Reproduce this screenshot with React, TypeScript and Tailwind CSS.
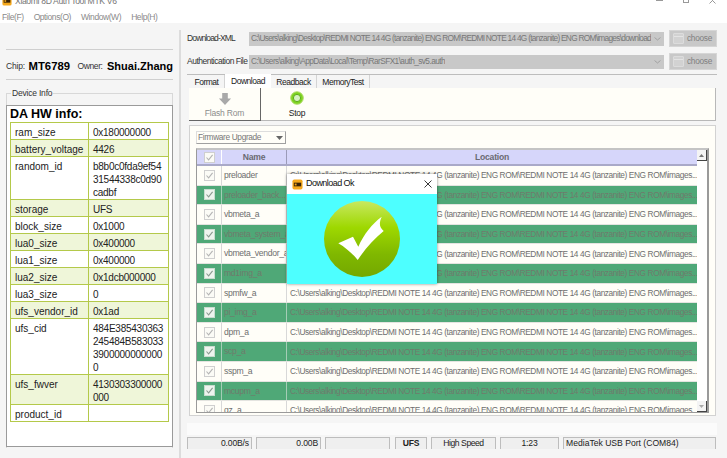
import React from "react";

const PATH = "C:\\Users\\alking\\Desktop\\REDMI NOTE 14 4G (tanzanite) ENG ROM\\REDMI NOTE 14 4G (tanzanite) ENG ROM\\images...";
const FILES = ["preloader", "preloader_back...", "vbmeta_a", "vbmeta_system_a", "vbmeta_vendor_a", "md1img_a", "spmfw_a", "pi_img_a", "dpm_a", "scp_a", "sspm_a", "mcupm_a", "gz_a"];

const INFO: { k: string; v: string[]; h: string }[] = [
  { k: "ram_size", v: ["0x180000000"], h: "h-[17px]" },
  { k: "battery_voltage", v: ["4426"], h: "h-[17px]" },
  { k: "random_id", v: ["b8b0c0fda9ef54", "31544338c0d90", "cadbf"], h: "h-[43px]" },
  { k: "storage", v: ["UFS"], h: "h-[17px]" },
  { k: "block_size", v: ["0x1000"], h: "h-[17px]" },
  { k: "lua0_size", v: ["0x400000"], h: "h-[17px]" },
  { k: "lua1_size", v: ["0x400000"], h: "h-[17px]" },
  { k: "lua2_size", v: ["0x1dcb000000"], h: "h-[17px]" },
  { k: "lua3_size", v: ["0"], h: "h-[17px]" },
  { k: "ufs_vendor_id", v: ["0x1ad"], h: "h-[17px]" },
  { k: "ufs_cid", v: ["484E385430363", "245484B583033", "3900000000000", "0"], h: "h-[56px]" },
  { k: "ufs_fwver", v: ["4130303300000", "000"], h: "h-[30px]" },
  { k: "product_id", v: [""], h: "h-[17px]" },
];

function Logo({ size }: { size: number }) {
  return (
    <svg width={size} height={size} viewBox="0 0 12 12" className="shrink-0">
      <rect x="0.5" y="0.5" width="11" height="11" rx="2" fill="#f5a81c" />
      <rect x="2" y="4" width="8" height="4" fill="#3a2408" />
      <rect x="3" y="5" width="2" height="2" fill="#f5a81c" />
    </svg>
  );
}

function Check({ dark }: { dark: boolean }) {
  return (
    <div className={`w-[11px] h-[11px] border flex items-center justify-center ${dark ? "border-[#c9dccf] bg-[#eef4ee]" : "border-[#cfcfcf] bg-[#fbfbf6]"}`}>
      <svg width="9" height="9" viewBox="0 0 9 9" fill="none">
        <path d="M1.5 4.5 L3.6 6.8 L7.6 1.8" stroke={dark ? "#8a9a90" : "#b4b4b4"} strokeWidth="1.1" />
      </svg>
    </div>
  );
}

function Choose() {
  return (
    <div className="w-[48px] h-[17px] bg-[#c8c8c8] border border-[#d6d6d6] flex items-center gap-[3px] pl-[3px] text-[#808080] text-[8.3px] tracking-[-0.3px]">
      <div className="w-[11px] h-[11px] border border-[#dcdcdc] bg-[#d2d2d2] rounded-[1px]">
        <div className="h-[3px] border-b border-[#e4e4e4]" />
      </div>
      <span>choose</span>
    </div>
  );
}

function Combo({ label, value, track, valueTrack }: { label: string; value: string; track: string; valueTrack: string }) {
  return (
    <div className="flex items-center h-[17px]">
      <span className={`w-[62px] shrink-0 text-[8.5px] text-[#333] whitespace-nowrap ${track}`}>{label}</span>
      <div className={`flex-1 min-w-0 h-[14px] bg-[#c8c8c8] flex items-center justify-between pl-[2px] pr-[3px] text-[#777] text-[8.3px] overflow-hidden ${valueTrack}`}>
        <span className="whitespace-nowrap overflow-hidden">{value}</span>
        <svg width="7" height="4" viewBox="0 0 7 4" fill="none" className="shrink-0 ml-[3px]">
          <path d="M0.5 0.5 L3.5 3 L6.5 0.5" stroke="#999" strokeWidth="0.8" />
        </svg>
      </div>
      <div className="ml-[5px] mr-[10px] shrink-0"><Choose /></div>
    </div>
  );
}

function StatusCell({ w, text, align = "text-right", bold = false, ml, track = "tracking-[-0.15px]" }: { w: string; text: string; align?: string; bold?: boolean; ml: string; track?: string }) {
  return (
    <div className={`${w} ${ml} ${align} ${track} ${bold ? "font-bold" : ""} shrink-0 h-[12px] bg-[#efefef] border-t border-l border-r border-[#bdbdbd] px-[2px] text-[8.6px] leading-[11px] text-[#222] whitespace-nowrap`}>
      {text}
    </div>
  );
}

export default function App() {
  return (
    <div className="w-[727px] h-[458px] overflow-hidden flex flex-col bg-[#f5f5f5] font-['Liberation_Sans',sans-serif] relative">
      {/* title */}
      <div className="h-[11px] bg-white flex justify-between overflow-hidden shrink-0">
        <div className="flex items-center gap-[3px] pl-[2px] -mt-[5px] h-[12px]">
          <Logo size={10} />
          <span className="text-[8.6px] text-[#777] tracking-[-0.35px]">Xiaomi 8D Auth Tool MTK V6</span>
        </div>
        <div className="flex items-start gap-[20px] pr-[11px] -mt-[3px]">
          <div className="w-[7px] h-[4px] border-b border-[#999]" />
          <div className="w-[6px] h-[6px] border border-[#999]" />
          <svg width="7" height="7" viewBox="0 0 7 7"><path d="M0.5 0.5 L6.5 6.5 M6.5 0.5 L0.5 6.5" stroke="#999" /></svg>
        </div>
      </div>
      {/* menu */}
      <div className="h-[12px] bg-white flex gap-[10px] pl-[2px] text-[8.5px] leading-[12px] text-[#8a8a8a] shrink-0 tracking-[-0.42px]">
        <span>File(F)</span><span>Options(O)</span><span>Window(W)</span><span>Help(H)</span>
      </div>

      <div className="flex-1 flex min-h-0">
        {/* left */}
        <div className="w-[181px] shrink-0 pl-[6px] pr-[6px] flex flex-col border-r-2 border-[#dcdcdc] mt-[7px]">
          <div className="mt-[19px] border-t border-[#cfcfcf] h-[31px] flex items-center border-b pt-[3px]">
            <span className="text-[8.5px] text-[#333] w-[23px] tracking-[-0.2px]">Chip:</span>
            <span className="text-[11.3px] font-bold text-black w-[50px]">MT6789</span>
            <span className="text-[8.5px] text-[#333] w-[30px] tracking-[-0.4px]">Owner:</span>
            <span className="text-[11px] font-bold text-black whitespace-nowrap">Shuai.Zhang</span>
          </div>
          <div className="relative mt-[13px] border-t border-x border-[#d8d8d8] pt-[11px] h-[355px]">
            <span className="absolute -top-[7px] left-[4px] bg-[#f5f5f5] px-[1px] text-[8.5px] leading-[12px] text-[#333] tracking-[-0.2px]">Device Info</span>
            <div className="h-[342px] bg-white border border-[#9a9a9a] -mx-px px-[3px]">
              <div className="text-[12.5px] leading-[15px] pt-[1px] font-bold text-black">DA HW info:</div>
              <div className="border-t border-l border-r border-[#b4c94a]">
                {INFO.map((r, i) => (
                  <div key={r.k} className={`flex ${r.h} border-b border-[#b4c94a] ${i % 2 === 1 ? "bg-[#eff6d9]" : "bg-white"} text-[10px] leading-[13px] text-[#222]`}>
                    <div className="w-[78px] shrink-0 border-r border-[#b4c94a] pl-[4px] pt-[3px]">{r.k}</div>
                    <div className="flex-1 pl-[4px] pt-[3px] tracking-[-0.25px]">
                      {r.v.map((l, j) => <div key={j} className="whitespace-nowrap">{l}</div>)}
                    </div>
                  </div>
                ))}
              </div>
            </div>
          </div>
        </div>

        {/* right */}
        <div className="flex-1 min-w-0 pl-[6px] flex flex-col pt-[7px]">
          <div className="flex flex-col gap-[6px]">
            <Combo track="tracking-[-0.85px]" valueTrack="tracking-[-0.72px]" label="Download-XML" value="C:\Users\alking\Desktop\REDMI NOTE 14 4G (tanzanite) ENG ROM\REDMI NOTE 14 4G (tanzanite) ENG ROM\images\download_" />
            <Combo track="tracking-[-0.5px]" valueTrack="tracking-[-0.58px]" label="Authentication File" value="C:\Users\alking\AppData\Local\Temp\RarSFX1\auth_sv5.auth" />
          </div>
          {/* tabs */}
          <div className="mt-[4px] mr-[10px] border-t border-[#bdbdbd] flex h-[14px] pl-[2px] text-[8.5px] leading-[14px] text-[#222] tracking-[-0.5px]">
            <div className="w-[36px] text-center border-r border-[#d4d4d4]">Format</div>
            <div className="w-[46px] -mt-px text-center bg-white">Download</div>
            <div className="w-[46px] text-center border-r border-[#d4d4d4]">Readback</div>
            <div className="w-[53px] text-center border-r border-[#d4d4d4]">MemoryTest</div>
          </div>
          {/* toolbar */}
          <div className="ml-[2px] mr-[11px] h-[33px] bg-[#fffef8] border-r border-b border-[#b8b8b8] flex text-[8.5px] tracking-[-0.2px]">
            <div className="w-[72px] border-r border-b border-[#666] flex flex-col items-center text-[#8c8c8c] -mb-px">
              <svg width="14" height="14" viewBox="0 0 14 15" className="mt-[4px]">
                <path d="M4 1 H10 V7 H13.5 L7 14 L0.5 7 H4 Z" fill="#a9a9a9" />
              </svg>
              <span className="leading-[12px] mt-[1px]">Flash Rom</span>
            </div>
            <div className="w-[72px] flex flex-col items-center text-[#222]">
              <svg width="14" height="14" viewBox="0 0 14 14" className="mt-[3px]">
                <circle cx="7" cy="7" r="6.3" fill="#7ed321" stroke="#b5dc70" />
                <circle cx="7" cy="7" r="3.6" fill="#d5f2c0" stroke="#5dab1a" />
              </svg>
              <span className="leading-[12px] mt-[2px]">Stop</span>
            </div>
          </div>
          {/* panel */}
          <div className="mt-[4px] ml-[2px] mr-[11px] h-[291px] bg-[#fffef8] border border-[#d2d2d2] px-[6px] pt-[5px] flex flex-col">
            <div className="w-[90px] h-[13px] border border-[#a0a0a0] border-l-[#ddd] border-t-[#ddd] flex items-center justify-between pl-[1px] pr-[2px] text-[8.3px] tracking-[-0.35px] text-[#777]">
              <span>Firmware Upgrade</span>
              <svg width="7" height="4" viewBox="0 0 7 4"><path d="M0 0 H7 L3.5 4 Z" fill="#666" /></svg>
            </div>
            <div className="mt-[4px] w-[513px] h-[265px] border-r-2 border-l border-b border-[#9a9a9a] border-t-2 border-t-[#c4c4c4] overflow-hidden flex">
              <div className="w-[500px] shrink-0">
                <div className="h-[14px] bg-[#d6d6fa] flex border-b-2 border-[#a9a9c8] box-content text-[8.6px] font-bold text-[#6a6a72] leading-[14px] tracking-[-0.2px]">
                  <div className="w-[25px] border-r border-[#fff] flex items-center justify-center"><Check dark={false} /></div>
                  <div className="w-[65px] border-r border-[#9b9bb8] text-center">Name</div>
                  <div className="flex-1 text-center">Location</div>
                </div>
                {FILES.map((n, i) => {
                  const dark = i % 2 === 1;
                  return (
                    <div key={n} className={`h-[19.6px] flex items-center border-b border-[#e4e4e0] text-[8.6px] whitespace-nowrap ${dark ? "bg-[#4fa877] text-[#6f7a6c]" : "text-[#6e6e6e]"}`}>
                      <div className={`w-[25px] h-full border-r ${dark ? "border-[#a4cdb6]" : "border-[#d8d8d8]"} flex items-center justify-center`}><Check dark={dark} /></div>
                      <div className={`w-[65px] h-full border-r ${dark ? "border-[#a4cdb6]" : "border-[#d8d8d8]"} pl-[2px] leading-[18px] overflow-hidden tracking-[-0.3px]`}>{n}</div>
                      <div className="flex-1 pl-[3px] leading-[18px] overflow-hidden text-[8.3px] tracking-[-0.4px]">{PATH}</div>
                    </div>
                  );
                })}
              </div>
              <div className="flex-1 bg-white flex flex-col justify-between">
                <div className="h-[11px] border-r border-b border-[#444] bg-[#f4f4f4] flex items-center justify-center">
                  <svg width="5" height="3" viewBox="0 0 5 3"><path d="M0 3 L2.5 0 L5 3 Z" fill="#777" /></svg>
                </div>
                <div className="h-[11px] border-r border-b border-[#444] bg-[#f4f4f4] flex items-center justify-center">
                  <svg width="5" height="3" viewBox="0 0 5 3"><path d="M0 0 L2.5 3 L5 0 Z" fill="#aaa" /></svg>
                </div>
              </div>
            </div>
          </div>
          <div className="mt-[7px] mr-[10px] h-[12px] bg-[#fbfbfb]" />
          <div className="mt-[2px] flex">
            <StatusCell ml="ml-0" w="w-[65px]" text="0.00B/s" />
            <StatusCell ml="ml-[4px]" w="w-[65px]" text="0.00B" />
            <StatusCell ml="ml-[4px]" w="w-[65px]" text="" />
            <StatusCell ml="ml-[5px]" w="w-[32px]" text="UFS" align="text-center" bold />
            <StatusCell ml="ml-[4px]" w="w-[65px]" text="High Speed" align="text-center" track="tracking-[-0.45px]" />
            <StatusCell ml="ml-[4px]" w="w-[59px]" text="1:23" align="text-center" />
            <StatusCell ml="ml-[4px]" w="w-[153px]" text="MediaTek USB Port (COM84)" align="text-left" track="tracking-[0px]" />
          </div>
        </div>
      </div>

      {/* dialog */}
      <div className="absolute left-[287px] top-[174px] w-[150px] h-[110px] flex flex-col shadow-[0_0_3px_rgba(0,0,0,0.45)]">
        <div className="h-[20px] bg-white flex items-center pl-[5px] pr-[5px] gap-[3px] text-[9px] tracking-[-0.55px] text-[#111]">
          <Logo size={11} />
          <span className="flex-1">Download Ok</span>
          <svg width="8" height="8" viewBox="0 0 8 8"><path d="M0.5 0.5 L7.5 7.5 M7.5 0.5 L0.5 7.5" stroke="#222" strokeWidth="0.9" /></svg>
        </div>
        <div className="flex-1 bg-[#4dffff] flex items-center justify-center">
          <svg width="76" height="76" viewBox="0 0 76 76">
            <defs>
              <linearGradient id="g" x1="0" y1="0" x2="0" y2="1">
                <stop offset="0" stopColor="#c8e860" />
                <stop offset="0.35" stopColor="#9ed800" />
                <stop offset="0.7" stopColor="#80b800" />
                <stop offset="1" stopColor="#74a800" />
              </linearGradient>
            </defs>
            <circle cx="38" cy="38" r="38" fill="url(#g)" />
            <path d="M14.3 42.3 L29 35.7 L34.3 45.7 C40 33 48 23 57.7 15.7 C55 22 55 26 59.7 30 C50 38 41 48 33.7 59 C28 52 22 47 14.3 42.3 Z" fill="#fff" />
          </svg>
        </div>
      </div>
    </div>
  );
}
